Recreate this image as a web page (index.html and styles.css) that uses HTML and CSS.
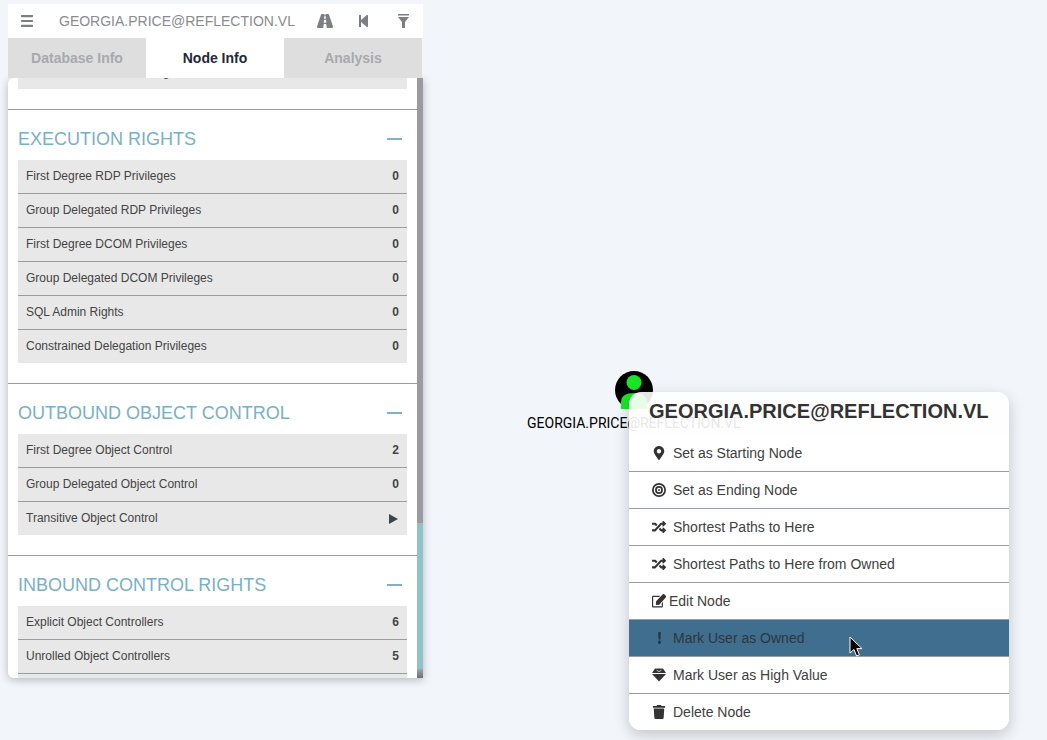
FILE: index.html
```html
<!DOCTYPE html>
<html>

<head>
	<meta charset="utf-8">
	<title>BloodHound</title>
	<link rel="stylesheet" href="styles.css">
</head>

<body>
	<svg class="defs" width="0" height="0">
		<symbol id="i-random" viewBox="0 0 512 512"><path d="M504.971 359.029c9.373 9.373 9.373 24.569 0 33.941l-80 79.984c-15.01 15.01-40.971 4.49-40.971-16.971V416h-58.785a12.004 12.004 0 0 1-8.773-3.812l-70.556-75.596 53.333-57.143L352 336h32v-39.981c0-21.438 25.943-31.998 40.971-16.971l80 79.981zM12 176h84l52.781 56.551 53.333-57.143-70.556-75.596A11.999 11.999 0 0 0 122.785 96H12c-6.627 0-12 5.373-12 12v56c0 6.627 5.373 12 12 12zm372 0v39.984c0 21.46 25.961 31.98 40.971 16.971l80-79.984c9.373-9.373 9.373-24.569 0-33.941l-80-79.981C409.943 24.021 384 34.582 384 56.019V96h-58.785a12.004 12.004 0 0 0-8.773 3.812L96 336H12c-6.627 0-12 5.373-12 12v56c0 6.627 5.373 12 12 12h110.785c3.326 0 6.503-1.381 8.773-3.812L352 176h32z"/></symbol>
	</svg>

	<div id="panel">
		<div class="searchbar">
			<svg class="bar-icon menu-icon" viewBox="0 60 448 392" preserveAspectRatio="none"><path d="M16 132h416c8.837 0 16-7.163 16-16V76c0-8.837-7.163-16-16-16H16C7.163 60 0 67.163 0 76v40c0 8.837 7.163 16 16 16zm0 160h416c8.837 0 16-7.163 16-16v-40c0-8.837-7.163-16-16-16H16c-8.837 0-16 7.163-16 16v40c0 8.837 7.163 16 16 16zm0 160h416c8.837 0 16-7.163 16-16v-40c0-8.837-7.163-16-16-16H16c-8.837 0-16 7.163-16 16v40c0 8.837 7.163 16 16 16z"/></svg>
			<div class="search-text">GEORGIA.PRICE@REFLECTION.VL</div>
			<svg class="bar-icon road-icon" viewBox="0 64 576 384" preserveAspectRatio="none"><path d="M573.19 402.67l-139.79-320C428.43 71.29 417.6 64 405.68 64h-97.59l2.45 23.16c.5 4.72-3.21 8.84-7.96 8.84h-29.16c-4.75 0-8.46-4.12-7.96-8.84L267.91 64h-97.59c-11.93 0-22.76 7.29-27.73 18.67L2.81 402.67C-6.45 423.86 8.31 448 30.54 448h196.84l10.31-97.68c.86-8.14 7.72-14.32 15.91-14.32h68.8c8.19 0 15.05 6.18 15.91 14.32L348.62 448h196.84c22.23 0 36.99-24.14 27.73-45.33zM260.4 135.16a8 8 0 0 1 7.96-7.16h39.29c4.09 0 7.53 3.09 7.96 7.16l4.6 43.58c.75 7.09-4.81 13.26-11.93 13.26h-40.54c-7.13 0-12.68-6.17-11.93-13.26l4.59-43.58zM315.64 304h-55.29c-9.5 0-16.91-8.23-15.91-17.68l5.07-48c.86-8.14 7.72-14.32 15.91-14.32h45.15c8.19 0 15.05 6.18 15.91 14.32l5.07 48c1 9.45-6.41 17.68-15.91 17.68z"/></svg>
			<svg class="bar-icon back-icon" viewBox="64 32 320 448" preserveAspectRatio="none"><path d="M64 468V44c0-6.6 5.4-12 12-12h48c6.6 0 12 5.4 12 12v176.4l195.5-181C352 20 384 33.8 384 64v384c0 30.2-32 44-52.5 24.5L136 292.3V468c0 6.6-5.4 12-12 12H76c-6.6 0-12-5.4-12-12z"/></svg>
			<svg class="bar-icon filter-icon" viewBox="0 0 11 14"><path d="M0 0H11V1.6H0zM0 3H11L7 8V14H4V8z"/></svg>
		</div>

		<div class="tabs">
			<div class="tab">Database Info</div>
			<div class="tab active">Node Info</div>
			<div class="tab">Analysis</div>
		</div>

		<div class="content">
			<div class="scroll-area">
				<div class="rows rows-first">
					<div class="row"><span>Derivative Local Admin Rights</span></div>
				</div>
				<hr>
				<div class="section-head"><span>EXECUTION RIGHTS</span><i class="collapse"></i></div>
				<div class="rows">
					<div class="row"><span>First Degree RDP Privileges</span><b>0</b></div>
					<div class="row"><span>Group Delegated RDP Privileges</span><b>0</b></div>
					<div class="row"><span>First Degree DCOM Privileges</span><b>0</b></div>
					<div class="row"><span>Group Delegated DCOM Privileges</span><b>0</b></div>
					<div class="row"><span>SQL Admin Rights</span><b>0</b></div>
					<div class="row"><span>Constrained Delegation Privileges</span><b>0</b></div>
				</div>
				<hr>
				<div class="section-head"><span>OUTBOUND OBJECT CONTROL</span><i class="collapse"></i></div>
				<div class="rows">
					<div class="row"><span>First Degree Object Control</span><b>2</b></div>
					<div class="row"><span>Group Delegated Object Control</span><b>0</b></div>
					<div class="row"><span>Transitive Object Control</span><i class="play"></i></div>
				</div>
				<hr>
				<div class="section-head"><span>INBOUND CONTROL RIGHTS</span><i class="collapse"></i></div>
				<div class="rows">
					<div class="row"><span>Explicit Object Controllers</span><b>6</b></div>
					<div class="row"><span>Unrolled Object Controllers</span><b>5</b></div>
					<div class="row"></div>
				</div>
			</div>
			<div class="scrollbar">
				<div class="track-top"></div>
				<div class="thumb"></div>
				<div class="track-bottom"></div>
			</div>
		</div>
	</div>

	<div id="node">
		<svg class="node-icon" viewBox="0 0 38 38">
			<circle cx="19" cy="19" r="19" fill="#000"/>
			<circle cx="19" cy="11.5" r="7.5" fill="#17e625"/>
			<path d="M6 38V31C6 25 11 22 19 22S32 25 32 31V38z" fill="#17e625"/>
		</svg>
		<div class="node-label">GEORGIA.PRICE@REFLECTION.VL</div>
	</div>

	<div id="menu">
		<div class="menu-title">GEORGIA.PRICE@REFLECTION.VL</div>
		<div class="item">
			<svg class="item-icon pin" viewBox="0 0 384 512"><path fill-rule="evenodd" d="M172.268 501.67C26.97 291.031 0 255.406 0 192 0 85.961 85.961 0 192 0s192 85.961 192 192c0 63.406-26.97 99.031-172.268 309.67-9.535 13.774-29.93 13.773-39.464 0zM192 272c44.183 0 80-35.817 80-80s-35.817-80-80-80-80 35.817-80 80 35.817 80 80 80z"/></svg>
			<span>Set as Starting Node</span>
		</div>
		<div class="item">
			<svg class="item-icon" viewBox="0 0 512 512"><path fill-rule="evenodd" d="M256 0a256 256 0 1 0 0 512 256 256 0 0 0 0-512zm0 64a192 192 0 1 1 0 384 192 192 0 0 1 0-384zm0 48a144 144 0 1 0 0 288 144 144 0 0 0 0-288zm0 64a80 80 0 1 1 0 160 80 80 0 0 1 0-160z"/><circle cx="256" cy="256" r="36"/></svg>
			<span>Set as Ending Node</span>
		</div>
		<div class="item">
			<svg class="item-icon"><use href="#i-random"/></svg>
			<span>Shortest Paths to Here</span>
		</div>
		<div class="item">
			<svg class="item-icon"><use href="#i-random"/></svg>
			<span>Shortest Paths to Here from Owned</span>
		</div>
		<div class="item item-edit">
			<svg class="item-icon edit" viewBox="0 0 576 512" preserveAspectRatio="none"><path d="M402.3 344.9l32-32c5-5 13.7-1.5 13.7 5.7V464c0 26.5-21.5 48-48 48H48c-26.5 0-48-21.5-48-48V112c0-26.5 21.5-48 48-48h273.5c7.1 0 10.7 8.6 5.7 13.7l-32 32c-1.5 1.5-3.5 2.3-5.7 2.3H48v352h352V350.5c0-2.1.8-4.1 2.3-5.6zm156.6-201.8L296.3 405.7l-90.4 10c-26.2 2.9-48.5-19.2-45.6-45.6l10-90.4L432.9 17.1c22.9-22.9 59.9-22.9 82.7 0l43.2 43.2c22.9 22.9 22.9 60 .1 82.8z"/></svg>
			<span>Edit Node</span>
		</div>
		<div class="item hover">
			<i class="bang-slot"><svg class="bang" viewBox="16 0 160 512" preserveAspectRatio="none"><path d="M176 432c0 44.112-35.888 80-80 80s-80-35.888-80-80 35.888-80 80-80 80 35.888 80 80zM25.26 25.199l13.6 272C39.499 309.972 50.041 320 62.83 320h66.34c12.789 0 23.331-10.028 23.97-22.801l13.6-272C167.425 11.49 156.496 0 142.77 0H49.23C35.504 0 24.575 11.49 25.26 25.199z"/></svg></i>
			<span>Mark User as Owned</span>
		</div>
		<div class="item">
			<svg class="item-icon" viewBox="0 0 14 13"><path d="M3 0H11L14 4.4H0z"/><path d="M0 5.6H14L7 13z"/><path d="M4.5 1.6L7 3.2L9.5 1.6" fill="none" stroke="#fff" stroke-width=".7"/></svg>
			<span>Mark User as High Value</span>
		</div>
		<div class="item">
			<svg class="item-icon trash" viewBox="0 0 448 512"><path d="M432 32H312l-9.4-18.7A24 24 0 0 0 281.1 0H166.8a23.72 23.72 0 0 0-21.4 13.3L136 32H16A16 16 0 0 0 0 48v32a16 16 0 0 0 16 16h416a16 16 0 0 0 16-16V48a16 16 0 0 0-16-16zM53.2 467a48 48 0 0 0 47.9 45h245.8a48 48 0 0 0 47.9-45L416 128H32z"/></svg>
			<span>Delete Node</span>
		</div>
	</div>

	<svg id="cursor" viewBox="0 0 14 22" width="14" height="22"><path d="M1 1V17L5 13.5L7.6 20L10.4 18.8L7.8 12.6H13z" fill="#000" stroke="#fff" stroke-width="1"/></svg>
</body>

</html>
```

FILE: styles.css
```css
html,
body {
	margin: 0;
	height: 100%;
	overflow: hidden;
}

body {
	background: #f2f5fa;
	font-family: "Liberation Sans", Arial, sans-serif;
	color: #333;
	padding: 4px 0 0 8px;
	box-sizing: border-box;
}

.defs {
	display: none;
}

#panel {
	width: 415px;
}

.searchbar {
	display: flex;
	align-items: center;
	height: 34px;
	background: #fff;
	color: #8a8b90;
}

.bar-icon {
	fill: #7e7f84;
	display: block;
	flex: none;
}

.menu-icon {
	width: 12px;
	height: 12px;
	margin-left: 13px;
}

.search-text {
	flex: 1;
	margin-left: 26px;
	font-size: 14px;
	white-space: nowrap;
}

.road-icon {
	width: 16px;
	height: 14px;
}

.back-icon {
	width: 9px;
	height: 12px;
	margin-left: 26px;
}

.filter-icon {
	width: 11px;
	height: 14px;
	margin: 0 14px 0 30px;
}

.tabs {
	display: flex;
	height: 40px;
}

.tab {
	width: 138px;
	background: #dedede;
	color: #a8a9ad;
	font-size: 14px;
	font-weight: bold;
	line-height: 40px;
	text-align: center;
}

.tab.active {
	background: #fff;
	color: #212934;
}

.content {
	display: flex;
	height: 600px;
	box-shadow: 0 2px 8px rgba(0, 0, 0, 0.25);
	border-radius: 6px 0 0 6px;
	overflow: hidden;
}

.scroll-area {
	flex: none;
	width: 409px;
	background: #fff;
	overflow: hidden;
}

.scrollbar {
	flex: none;
	width: 6px;
	display: flex;
	flex-direction: column;
}

.track-top {
	height: 445px;
	background: #9a9ba0;
}

.thumb {
	height: 146px;
	background: #8fc3c9;
}

.track-bottom {
	flex: 1;
	background: linear-gradient(#a5a5a8, #6d6e72);
}

hr {
	height: 1px;
	margin: 20px 0 0;
	border: 0;
	background: #999ca1;
}

.section-head {
	display: flex;
	align-items: center;
	justify-content: space-between;
	box-sizing: border-box;
	height: 50px;
	padding: 8px 15px 0 10px;
	color: #7aafc5;
	font-size: 18px;
}

.collapse {
	width: 15px;
	height: 2px;
	background: #7fb2c9;
}

.rows {
	margin: 0 10px;
}

.rows-first {
	margin-top: -22px;
}

.row {
	display: flex;
	align-items: center;
	justify-content: space-between;
	box-sizing: border-box;
	height: 34px;
	padding: 0 8px 2px;
	background: #e8e8e8;
	border-bottom: 1px solid #999ca1;
	font-size: 12px;
	color: #444;
}

.row:last-child {
	height: 33px;
	border-bottom: 0;
}

.row b {
	color: #444;
}

.play {
	width: 0;
	height: 0;
	margin: 2px 1px 0 0;
	border-left: 9px solid #37474f;
	border-top: 5px solid transparent;
	border-bottom: 5px solid transparent;
}

#node {
	position: absolute;
	left: 527px;
	top: 371px;
	width: 215px;
}

.node-icon {
	display: block;
	width: 38px;
	height: 38px;
	margin: 0 0 5px 88px;
}

.node-label {
	font: 14px/18px Roboto, sans-serif;
	color: #000;
	white-space: nowrap;
}

#menu {
	position: absolute;
	left: 629px;
	top: 392px;
	width: 380px;
	height: 338px;
	background: rgba(255, 255, 255, 0.9);
	border-radius: 12px;
	box-shadow: 0 5px 15px rgba(0, 0, 0, 0.2);
	overflow: hidden;
}

.menu-title {
	height: 43px;
	padding-left: 20px;
	font-size: 20px;
	font-weight: bold;
	line-height: 39px;
	color: #333;
	white-space: nowrap;
}

.item {
	display: flex;
	align-items: center;
	box-sizing: border-box;
	height: 37px;
	padding-left: 23px;
	border-bottom: 1px solid #999ca1;
	background: #fff;
	font-size: 14px;
	color: #404040;
}

.item:last-child {
	height: 36px;
	border-bottom: 0;
}

.item-icon {
	flex: none;
	width: 14px;
	height: 14px;
	margin-right: 7px;
	fill: #333;
}

.item-edit .item-icon {
	width: 14px;
	height: 13.5px;
	margin-right: 3px;
}

.bang-slot {
	display: flex;
	justify-content: center;
	flex: none;
	width: 14px;
	margin-right: 7px;
}

.bang {
	display: block;
	width: 3px;
	height: 12px;
	fill: #2d3640;
}

.item.hover {
	background: #406e8e;
	color: #2d3640;
}

#cursor {
	position: absolute;
	left: 849px;
	top: 636px;
}
```
